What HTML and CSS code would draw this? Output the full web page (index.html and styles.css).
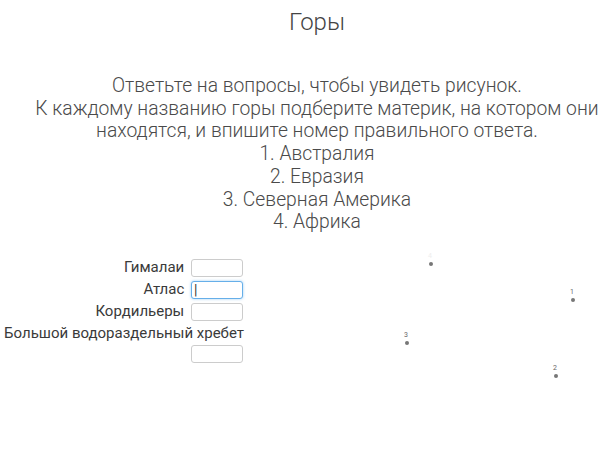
FILE: index.html
```html
<!DOCTYPE html>
<html lang="ru">
<head>
  <meta charset="UTF-8" />
  <title>Горы</title>
  <link rel="stylesheet" href="styles.css">
</head>
<body>
  <div class="page">
    <h1 class="title">Горы</h1>
    <p class="task">
      Ответьте на вопросы, чтобы увидеть рисунок.<br>
      К каждому названию горы подберите материк, на котором они находятся, и впишите номер правильного ответа.<br>
      1. Австралия<br>
      2. Евразия<br>
      3. Северная Америка<br>
      4. Африка
    </p>

    <div class="work">
      <form class="answers">
        <div class="row"><label>Гималаи</label> <input type="text"></div>
        <div class="row"><label>Атлас</label> <input type="text" class="active" value="|"></div>
        <div class="row"><label>Кордильеры</label> <input type="text"></div>
        <div class="row"><label>Большой водораздельный хребет</label> <input type="text"></div>
      </form>

      <div class="picture">
        <span class="dot" style="left: 37px; top: 5px;"><i>4</i></span>
        <span class="dot" style="left: 179px; top: 41px;"><i>1</i></span>
        <span class="dot" style="left: 13px; top: 84px;"><i>3</i></span>
        <span class="dot" style="left: 162px; top: 117px;"><i>2</i></span>
      </div>
    </div>
  </div>
</body>
</html>
```

FILE: styles.css
```css
body {
  margin: 0;
  background: #fff;
  color: #333;
  font-family: Roboto, "Noto Sans", sans-serif;
}

.page {
  width: 634px;
}

.title {
  margin: 7px 0 0;
  text-align: center;
  font-size: 24px;
  font-weight: 300;
  line-height: 30px;
  color: #444;
}

.task {
  margin: 38px 0 0;
  text-align: center;
  font-size: 19.3px;
  font-weight: 300;
  line-height: 22.7px;
  color: #4a4a4a;
}

.work {
  display: flex;
  margin-top: 23px;
}

.answers {
  width: 244px;
  text-align: right;
  font-size: 15px;
  line-height: 20px;
}

.row label {
  color: #3a3a3a;
}

.row input {
  width: 46px;
  height: 16px;
  margin: 2px 1px 2px 3px;
  padding: 0 2px;
  border: 1px solid #ccc;
  border-radius: 3px;
  font: 14px Roboto, sans-serif;
  color: #333;
  vertical-align: middle;
  box-sizing: content-box;
}

.row input.active {
  border-color: #66afe9;
  box-shadow: 0 0 3px rgba(102, 175, 233, 0.6);
}

.picture {
  position: relative;
  flex: 1;
  margin-left: 148px;
  height: 130px;
}

.dot {
  position: absolute;
  width: 4px;
  height: 4px;
  border-radius: 50%;
  background: #777;
}

.dot i {
  position: absolute;
  left: -1px;
  top: -10px;
  font-style: normal;
  font-size: 7px;
  line-height: 8px;
  color: #666;
}

.dot:first-child i {
  color: #eee;
}
```
